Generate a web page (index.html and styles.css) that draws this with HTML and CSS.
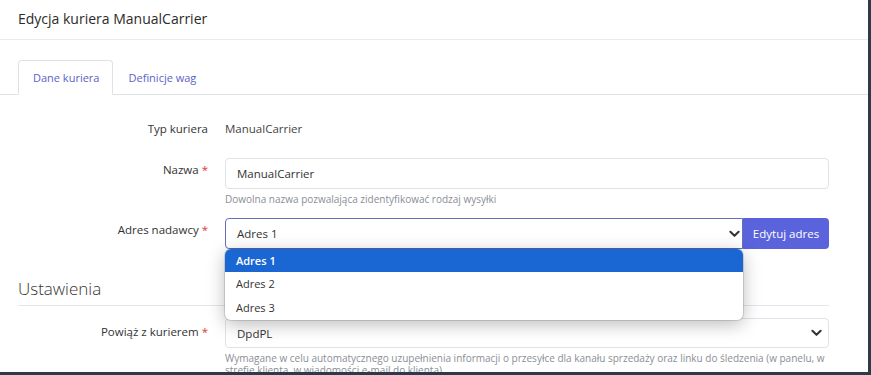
FILE: index.html
```html
<!DOCTYPE html>
<html lang="pl">

<head>
    <meta charset="UTF-8">
    <meta name="viewport" content="width=device-width, initial-scale=1.0">
    <title>Edycja kuriera</title>
    <link rel="stylesheet" href="styles.css">
</head>

<body>
    <div class="modal">
        <div class="modal-header">
            <h1>Edycja kuriera ManualCarrier</h1>
        </div>

        <ul class="tabs">
            <li class="tab active">Dane kuriera</li>
            <li class="tab">Definicje wag</li>
        </ul>

        <form class="form">
            <div class="row row-static">
                <label class="label">Typ kuriera</label>
                <div class="value">ManualCarrier</div>
            </div>

            <div class="row row-name">
                <label class="label">Nazwa <span class="req">*</span></label>
                <div>
                    <div class="control">ManualCarrier</div>
                    <div class="help">Dowolna nazwa pozwalająca zidentyfikować rodzaj wysyłki</div>
                </div>
            </div>

            <div class="row row-address">
                <label class="label">Adres nadawcy <span class="req">*</span></label>
                <div class="input-group">
                    <div class="control select focused">
                        <span>Adres 1</span>
                        <svg class="chevron" viewBox="0 0 12 8" width="11" height="8">
                            <path d="M1.5 1.5 L6 6 L10.5 1.5" fill="none" stroke="#333" stroke-width="2.2" stroke-linecap="round" stroke-linejoin="round"/>
                        </svg>
                    </div>
                    <button type="button" class="btn">Edytuj adres</button>

                    <ul class="dropdown">
                        <li class="selected">Adres 1</li>
                        <li>Adres 2</li>
                        <li>Adres 3</li>
                    </ul>
                </div>
            </div>

            <h2 class="section-title">Ustawienia</h2>

            <div class="row row-link">
                <label class="label">Powiąż z kurierem <span class="req">*</span></label>
                <div>
                    <div class="control select">
                        <span>DpdPL</span>
                        <svg class="chevron" viewBox="0 0 12 8" width="11" height="8">
                            <path d="M1.5 1.5 L6 6 L10.5 1.5" fill="none" stroke="#333" stroke-width="2.2" stroke-linecap="round" stroke-linejoin="round"/>
                        </svg>
                    </div>
                    <div class="help help-long">Wymagane w celu automatycznego uzupełnienia informacji o przesyłce dla kanału sprzedaży oraz linku do śledzenia (w panelu, w strefie klienta, w wiadomości e-mail do klienta)</div>
                </div>
            </div>
        </form>
    </div>
</body>

</html>
```

FILE: styles.css
```css
body {
    margin: 0;
    padding: 0;
    background-color: #2e3a4b;
    font-family: "Open Sans", Arial, sans-serif;
    color: #333;
}

.modal {
    width: 868px;
    height: 372px;
    background-color: #fff;
    overflow: hidden;
}

.modal-header {
    height: 39px;
    border-bottom: 1px solid #e9ecef;
    padding-left: 18px;
    display: flex;
    align-items: center;
}

.modal-header h1 {
    margin: 0;
    font-size: 14px;
    font-weight: 500;
    color: #2b2b2b;
    margin-top: -2px;
}

.tabs {
    list-style: none;
    margin: 20px 0 0 0;
    padding: 0 0 0 18px;
    display: flex;
    border-bottom: 1px solid #dee2e6;
    height: 34px;
}

.tab {
    padding: 0 13px 0 14px;
    font-size: 11px;
    color: #5c62c9;
    line-height: 34px;
    border: 1px solid transparent;
    border-radius: 4px 4px 0 0;
    margin-bottom: -1px;
}

.tab.active {
    border-color: #dee2e6;
    border-bottom-color: #fff;
    background-color: #fff;
}

.form {
    padding: 0 39px 0 18px;
}

.row {
    display: grid;
    grid-template-columns: 190px 1fr;
    column-gap: 17px;
}

.label {
    text-align: right;
    font-size: 11.5px;
    line-height: 18px;
    padding-top: 3px;
    color: #333;
}

.req {
    color: #e3342f;
}

.row-static {
    margin-top: 25px;
}

.row-static .label {
    padding-top: 0;
}

.value {
    font-size: 11.5px;
    line-height: 18px;
    color: #444;
}

.row-name {
    margin-top: 20px;
}

.control {
    height: 31px;
    box-sizing: border-box;
    border: 1px solid #dfe2e6;
    border-radius: 4px;
    padding: 0 11px;
    display: flex;
    align-items: center;
    font-size: 11.5px;
    color: #333;
}

.select {
    justify-content: space-between;
    padding-right: 6px;
}

.help {
    font-size: 10px;
    line-height: 14px;
    color: #8a8e96;
    margin-top: 3px;
}

.row-address {
    margin-top: 12px;
}

.input-group {
    display: flex;
    position: relative;
}

.input-group .select {
    flex: 1;
    height: 31px;
    border-radius: 4px 0 0 4px;
    padding-right: 2px;
}

.focused {
    border-color: #6470b8;
}

.btn {
    width: 86px;
    height: 31px;
    border: none;
    border-radius: 0 4px 4px 0;
    background-color: #5b63dc;
    color: #fff;
    font-family: inherit;
    font-size: 11.5px;
    font-weight: 500;
    padding: 0;
}

.dropdown {
    position: absolute;
    top: 31px;
    left: 0;
    width: 518px;
    margin: 0;
    padding: 0;
    list-style: none;
    background-color: #fff;
    border-radius: 6px;
    overflow: hidden;
    box-shadow: 0 4px 18px rgba(0, 0, 0, 0.28), 0 0 0 1px rgba(0, 0, 0, 0.12);
    z-index: 5;
}

.dropdown li {
    height: 24px;
    line-height: 24px;
    padding-left: 11px;
    font-size: 11px;
    color: #333;
}

.dropdown li.selected {
    background-color: #1a66d2;
    color: #fff;
    font-weight: 600;
    height: 23px;
    line-height: 23px;
}

.section-title {
    margin: 28px 0 0 0;
    padding-bottom: 4px;
    font-size: 17px;
    line-height: 24px;
    font-weight: 300;
    color: #333;
    border-bottom: 1px solid #e3e6ea;
}

.row-link {
    margin-top: 12px;
}

.row-link .label {
    padding-top: 5px;
}

.row-link .control {
    height: 30px;
}

.help-long {
    line-height: 12px;
    margin-top: 4px;
}
```
